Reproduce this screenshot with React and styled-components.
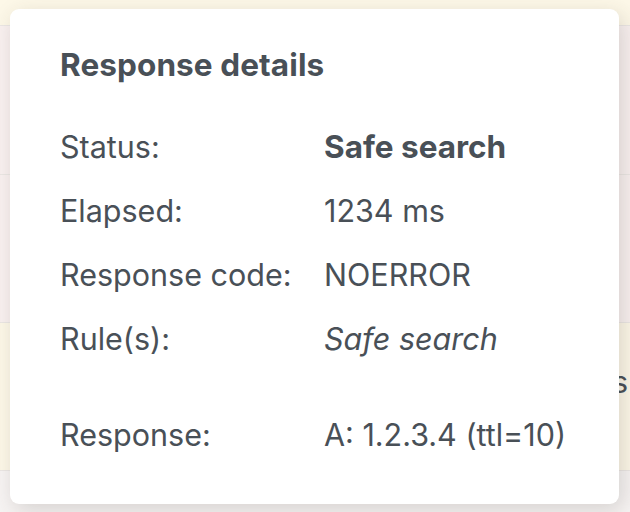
import React from 'react'
import styled, { createGlobalStyle } from 'styled-components'

const GlobalStyle = createGlobalStyle`
    html, body {
        margin: 0;
        padding: 0;
        background: #ffffff;
    }
    body {
        font-family: Inter, "Noto Sans", "Liberation Sans", sans-serif;
        color: #495057;
        -webkit-font-smoothing: antialiased;
    }
`

const tones = {
    yellow: '#fdf8e8',
    pink: '#f9f1f0',
    plain: '#f7f4f3',
}

const details = [
    { label: 'Status:', value: 'Safe search', kind: 'bold' },
    { label: 'Elapsed:', value: '1234 ms' },
    { label: 'Response code:', value: 'NOERROR' },
    { label: 'Rule(s):', value: 'Safe search', kind: 'italic' },
    { label: 'Response:', value: 'A: 1.2.3.4 (ttl=10)', spaced: true },
]

export default function App() {
    return (
        <>
            <GlobalStyle />
            <Page>
                <LogTable>
                    <LogRow $tone='yellow' $height={25} />
                    <LogRow $tone='pink' $height={148} />
                    <LogRow $tone='pink' $height={147} />
                    <LogRow $tone='yellow' $height={147}>
                        <LogCell>1234 ms</LogCell>
                    </LogRow>
                    <LogRow $tone='plain' $height={60} />
                </LogTable>

                <Tooltip>
                    <Title>Response details</Title>
                    <DetailList>
                        {details.map((item) => (
                            <DetailRow key={item.label} $spaced={item.spaced}>
                                <Label>{item.label}</Label>
                                <Value $kind={item.kind}>{item.value}</Value>
                            </DetailRow>
                        ))}
                    </DetailList>
                </Tooltip>
            </Page>
        </>
    )
}

const Page = styled.div`
    position: relative;
    width: 630px;
    height: 512px;
    overflow: hidden;
`

const LogTable = styled.div`
    display: flex;
    flex-direction: column;
`

const LogRow = styled.div`
    display: flex;
    justify-content: flex-end;
    align-items: flex-start;
    height: ${({ $height }) => $height}px;
    background: ${({ $tone }) => tones[$tone]};
    border-bottom: 1px solid #ebe7e4;
    flex-shrink: 0;
`

const LogCell = styled.div`
    font-size: 30px;
    line-height: 36px;
    padding-top: 41px;
    padding-right: 2px;
    white-space: nowrap;
`

const Tooltip = styled.div`
    position: absolute;
    top: 9px;
    left: 10px;
    width: 609px;
    height: 495px;
    box-sizing: border-box;
    padding: 39px 50px 0;
    background: #ffffff;
    border-radius: 9px;
    box-shadow: 4px 6px 22px rgba(60, 50, 45, 0.18);
`

const Title = styled.div`
    font-size: 31.5px;
    line-height: 34px;
    font-weight: 700;
    letter-spacing: 0.1px;
    margin-bottom: 33px;
`

const DetailList = styled.div`
    display: flex;
    flex-direction: column;
`

const DetailRow = styled.div`
    display: grid;
    grid-template-columns: 264px 1fr;
    font-size: 30.5px;
    line-height: 64px;
    margin-top: ${({ $spaced }) => ($spaced ? '32px' : '0')};
`

const Label = styled.span`
    white-space: nowrap;
`

const Value = styled.span`
    white-space: nowrap;
    font-size: ${({ $kind }) => ($kind === 'bold' ? '31.5px' : 'inherit')};
    font-weight: ${({ $kind }) => ($kind === 'bold' ? 700 : 400)};
    font-style: ${({ $kind }) => ($kind === 'italic' ? 'italic' : 'normal')};
`
